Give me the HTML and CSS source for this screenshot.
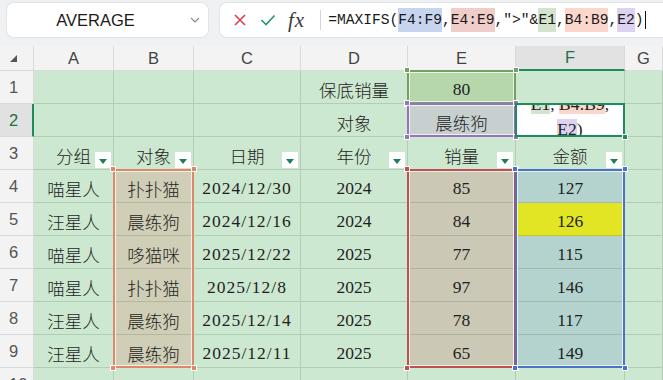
FILE: index.html
```html
<!DOCTYPE html>
<html lang="zh-CN">
<head>
    <meta charset="UTF-8">
    <meta name="viewport" content="width=device-width, initial-scale=1.0">
    <title>MAXIFS</title>
    <link rel="stylesheet" href="styles.css">
</head>
<body>
    <div class="toolbar">
        <div class="namebox">
            <span class="name">AVERAGE</span>
            <svg class="chevron" width="10" height="6" viewBox="0 0 10 6"><path d="M1 1 L5 5 L9 1" fill="none" stroke="#8a8a8a" stroke-width="1.2"/></svg>
        </div>
        <div class="formulabar">
            <svg class="ico-x" width="14" height="14" viewBox="0 0 14 14"><path d="M2 2 L12 12 M12 2 L2 12" stroke="#d9414f" stroke-width="1.6"/></svg>
            <svg class="ico-ok" width="16" height="14" viewBox="0 0 16 14"><path d="M1.5 7 L6 11.5 L14.5 2.5" fill="none" stroke="#23956a" stroke-width="1.6"/></svg>
            <span class="fx">fx</span>
            <span class="sep"></span>
            <div class="formula">=MAXIFS(<span class="ref r-f">F4:F9</span>,<span class="ref r-e">E4:E9</span>,″&gt;″&amp;<span class="ref r-e1">E1</span>,<span class="ref r-b">B4:B9</span>,<span class="ref r-e2">E2</span>)<span class="caret"></span></div>
        </div>
    </div>

    <div class="sheet">
        <div class="cells">
            <!-- cabecera de columnas -->
            <div class="c corner"><svg width="7" height="7" viewBox="0 0 7 7"><path d="M7 0 L7 7 L0 7 Z" fill="#555"/></svg></div>
            <div class="c ch">A</div>
            <div class="c ch">B</div>
            <div class="c ch">C</div>
            <div class="c ch">D</div>
            <div class="c ch">E</div>
            <div class="c ch sel">F</div>
            <div class="c ch">G</div>

            <div class="c rh">1</div>
            <div class="c"></div>
            <div class="c"></div>
            <div class="c"></div>
            <div class="c">保底销量</div>
            <div class="c e1">80</div>
            <div class="c"></div>
            <div class="c"></div>

            <div class="c rh sel">2</div>
            <div class="c"></div>
            <div class="c"></div>
            <div class="c"></div>
            <div class="c">对象</div>
            <div class="c e2">晨练狗</div>
            <div class="c f2">
                <div class="spill">
                    <div><span class="ref r-e1">E1</span>, <span class="ref r-b">B4:B9</span>,</div>
                    <div><span class="ref r-e2">E2</span>)</div>
                </div>
            </div>
            <div class="c"></div>

            <div class="c rh">3</div>
            <div class="c">分组<span class="flt"></span></div>
            <div class="c">对象<span class="flt"></span></div>
            <div class="c">日期<span class="flt"></span></div>
            <div class="c">年份<span class="flt"></span></div>
            <div class="c">销量<span class="flt"></span></div>
            <div class="c">金额<span class="flt"></span></div>
            <div class="c"></div>

            <div class="c rh">4</div>
            <div class="c">喵星人</div>
            <div class="c tb">扑扑猫</div>
            <div class="c date">2024/12/30</div>
            <div class="c">2024</div>
            <div class="c te">85</div>
            <div class="c tf">127</div>
            <div class="c"></div>

            <div class="c rh">5</div>
            <div class="c">汪星人</div>
            <div class="c tb">晨练狗</div>
            <div class="c date">2024/12/16</div>
            <div class="c">2024</div>
            <div class="c te">84</div>
            <div class="c hl">126</div>
            <div class="c"></div>

            <div class="c rh">6</div>
            <div class="c">喵星人</div>
            <div class="c tb">哆猫咪</div>
            <div class="c date">2025/12/22</div>
            <div class="c">2025</div>
            <div class="c te">77</div>
            <div class="c tf">115</div>
            <div class="c"></div>

            <div class="c rh">7</div>
            <div class="c">喵星人</div>
            <div class="c tb">扑扑猫</div>
            <div class="c date">2025/12/8</div>
            <div class="c">2025</div>
            <div class="c te">97</div>
            <div class="c tf">146</div>
            <div class="c"></div>

            <div class="c rh">8</div>
            <div class="c">汪星人</div>
            <div class="c tb">晨练狗</div>
            <div class="c date">2025/12/14</div>
            <div class="c">2025</div>
            <div class="c te">78</div>
            <div class="c tf">117</div>
            <div class="c"></div>

            <div class="c rh">9</div>
            <div class="c">汪星人</div>
            <div class="c tb">晨练狗</div>
            <div class="c date">2025/12/11</div>
            <div class="c">2025</div>
            <div class="c te">65</div>
            <div class="c tf">149</div>
            <div class="c"></div>

            <div class="c rh">10</div>
            <div class="c"></div>
            <div class="c"></div>
            <div class="c"></div>
            <div class="c"></div>
            <div class="c"></div>
            <div class="c"></div>
            <div class="c"></div>
        </div>

        <!-- marcos de referencia del formula -->
        <div class="marks">
            <div class="box box-e1"><i class="h tl"></i><i class="h tr"></i><i class="h bl"></i><i class="h br"></i></div>
            <div class="box box-e2"><i class="h tl"></i><i class="h tr"></i><i class="h bl"></i><i class="h br"></i></div>
            <div class="box box-active"><i class="h br"></i></div>
            <div class="box box-b"><i class="h tl"></i><i class="h tr"></i><i class="h bl"></i><i class="h br"></i></div>
            <div class="box box-e"><i class="h tl"></i><i class="h tr"></i><i class="h bl"></i><i class="h br"></i></div>
            <div class="box box-f"><i class="h tl"></i><i class="h tr"></i><i class="h bl"></i><i class="h br"></i></div>
        </div>
    </div>
</body>
</html>
```

FILE: styles.css
```css
html,
body {
    height: 380px;
}

body {
    margin: 0;
    background-color: #eff1f3;
    font-family: "Liberation Serif", "Noto Sans CJK SC", serif;
    overflow: hidden;
}

/* Barra superior */
.toolbar {
    display: flex;
    align-items: flex-start;
    gap: 12px;
    height: 46px;
    padding: 3px 0 0 7px;
    box-sizing: border-box;
}

.namebox {
    width: 201px;
    height: 34px;
    flex: none;
    display: flex;
    align-items: center;
    background-color: #ffffff;
    border-radius: 7px;
    box-shadow: 0 0 0 1px #e2e4e7;
}

.name {
    width: 177px;
    text-align: center;
    font-family: "Liberation Sans", sans-serif;
    font-size: 16.5px;
    color: #1a1a1a;
}

.chevron {
    margin-left: 6px;
}

.formulabar {
    flex: 1;
    height: 34px;
    display: flex;
    align-items: center;
    padding-left: 13px;
    background-color: #ffffff;
    border-radius: 7px 0 0 7px;
    box-shadow: 0 0 0 1px #e2e4e7;
}

.ico-ok {
    margin-left: 13px;
}

.fx {
    margin-left: 12px;
    font-family: "Liberation Serif", serif;
    font-style: italic;
    font-size: 21px;
    letter-spacing: 1px;
    color: #3a3a3a;
}

.sep {
    width: 1px;
    height: 20px;
    margin-left: 15px;
    background-color: #d4d4d4;
}

.formula {
    margin-left: 7px;
    font-family: "Liberation Mono", monospace;
    font-size: 14.6px;
    color: #1a1a1a;
    white-space: nowrap;
    display: flex;
    align-items: center;
}

.formula .ref {
    padding: 4px 0;
}

.r-f { background-color: #c6d4ef; }
.r-e { background-color: #f0cdc9; }
.r-e1 { background-color: #d3e3cd; }
.r-b { background-color: #fad6cc; }
.r-e2 { background-color: #ddd2ef; }

.caret {
    width: 1px;
    height: 18px;
    margin-left: 1px;
    background-color: #111;
}

/* Hoja */
.sheet {
    display: grid;
}

.cells,
.marks {
    grid-area: 1 / 1;
    display: grid;
    grid-template-columns: 34px 80px 80px 107px 107px 108px 109px 38px;
    grid-template-rows: 25px repeat(10, 33px);
}

.cells {
    background-color: #cde8d0;
}

.c {
    position: relative;
    display: flex;
    align-items: center;
    justify-content: center;
    padding-top: 4px;
    box-sizing: border-box;
    border-right: 1px solid rgba(70, 95, 75, 0.2);
    border-bottom: 1px solid rgba(70, 95, 75, 0.2);
    font-size: 17.5px;
    font-weight: 300;
    color: #1f1f1f;
    white-space: nowrap;
}

.corner,
.ch,
.rh {
    padding-top: 0;
    background-color: #f3f3f3;
    border-right: 1px solid #dadada;
    border-bottom: 1px solid #dadada;
    font-family: "Liberation Sans", sans-serif;
    font-weight: 400;
    color: #444;
}

.corner {
    justify-content: flex-start;
    padding-left: 10px;
}

.ch {
    font-size: 16.5px;
}

.ch.sel {
    background-color: #e1e2e1;
    color: #1d7145;
    border-bottom: 2px solid #1f8a5b;
}

.rh {
    justify-content: flex-start;
    padding-left: 9px;
    font-size: 16.5px;
    color: #555;
}

.rh.sel {
    background-color: #e1e1e1;
    color: #1d7145;
    border-right: 2px solid #1f8a5b;
}

.date {
    letter-spacing: 1px;
}

.e1 { background-color: #b5d7ab; }
.e2 { background-color: #c7cfcf; }
.tb { background-color: #d0ceb6; }
.te { background-color: #cbc8b6; }
.tf { background-color: #b4d3cf; }
.hl { background-color: #e1e524; }

.f2 {
    background-color: #ffffff;
    align-items: flex-end;
    padding-top: 0;
    overflow: hidden;
}

.spill {
    margin-bottom: -6px;
    line-height: 25px;
    text-align: center;
}

/* boton de filtro */
.flt {
    position: absolute;
    right: 2px;
    bottom: 1px;
    width: 16px;
    height: 16px;
    background-color: #ffffff;
    display: flex;
    align-items: center;
    justify-content: center;
}

.flt::after {
    content: "";
    border-left: 4px solid transparent;
    border-right: 4px solid transparent;
    border-top: 5px solid #1f7f56;
    margin-top: 2px;
}

/* Marcos */
.marks {
    position: relative;
    z-index: 2;
    pointer-events: none;
}

.box {
    position: relative;
    margin: -1px 0 0 -1px;
    border: 2px solid;
    box-shadow: inset 0 0 0 1px rgba(255, 255, 255, 0.7);
}

.box-e1 { grid-column: 6; grid-row: 2; border-color: #72a25f; }
.box-e2 { grid-column: 6; grid-row: 3; border-color: #9a70c0; }
.box-active { grid-column: 7; grid-row: 3; border-color: #1f8a5b; box-shadow: none; }
.box-b { grid-column: 3; grid-row: 5 / 11; border-color: #e0876a; }
.box-e { grid-column: 6; grid-row: 5 / 11; border-color: #c0504d; }
.box-f { grid-column: 7; grid-row: 5 / 11; border-color: #4a72c8; }

.h {
    position: absolute;
    width: 4px;
    height: 4px;
    border: 1px solid #ffffff;
}

.box-e1 .h { background-color: #72a25f; }
.box-e2 .h { background-color: #9a70c0; }
.box-active .h { background-color: #1f8a5b; }
.box-b .h { background-color: #e0876a; }
.box-e .h { background-color: #c0504d; }
.box-f .h { background-color: #4a72c8; }

.tl { left: -5px; top: -5px; }
.tr { right: -5px; top: -5px; }
.bl { left: -5px; bottom: -5px; }
.br { right: -5px; bottom: -5px; }
```
